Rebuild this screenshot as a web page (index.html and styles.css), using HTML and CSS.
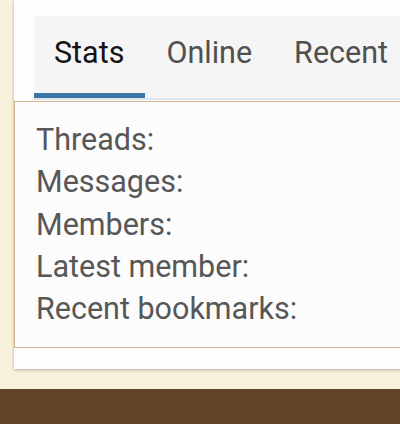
FILE: index.html
```html
<!DOCTYPE html>
<html>
<head>
<meta charset="utf-8">
<link rel="stylesheet" href="styles.css">
</head>
<body>
<div class="page">
  <div class="card">
    <div class="tabs">
      <span class="tab active">Stats</span>
      <span class="tab">Online</span>
      <span class="tab">Recent</span>
    </div>
    <div class="panel">
      <div class="row">Threads:</div>
      <div class="row">Messages:</div>
      <div class="row">Members:</div>
      <div class="row">Latest member:</div>
      <div class="row">Recent bookmarks:</div>
    </div>
  </div>
</div>
<div class="footer"></div>
</body>
</html>
```
FILE: styles.css
```css
html, body {
  margin: 0;
  padding: 0;
  height: 424px;
  overflow: hidden;
  background: #f8f2dc;
  font-family: Roboto, "Liberation Sans", sans-serif;
}
.page {
  height: 389px;
  padding-left: 14px;
  box-sizing: border-box;
  overflow: hidden;
}
.card {
  width: 440px;
  height: 369px;
  background: #fdfdfd;
  box-shadow: 0 1px 3px rgba(0, 0, 0, 0.28);
  padding-top: 16px;
  box-sizing: border-box;
}
.tabs {
  margin-left: 20px;
  display: flex;
  background: #f5f5f5;
  border-bottom: 2px solid #dee4ea;
  white-space: nowrap;
}
.tab {
  font-size: 30.5px;
  line-height: 28px;
  color: #505050;
  padding: 23px 21px 26px 21px;
  border-bottom: 5px solid transparent;
}
.tab.active {
  color: #141414;
  border-bottom-color: #3b76a6;
  padding-left: 20px;
  padding-right: 21px;
}
.panel {
  margin-top: 1px;
  background: #fcfcfc;
  border: 1px solid #d2b290;
  padding: 17px 20px 17px 21px;
}
.row {
  font-size: 30.5px;
  line-height: 42.25px;
  color: #575757;
}
.footer {
  height: 35px;
  background: #614428;
}
```
